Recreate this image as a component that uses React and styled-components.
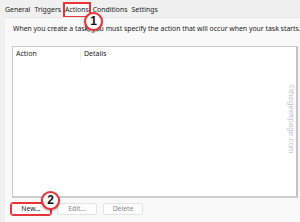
import React from 'react';
import styled, {createGlobalStyle} from 'styled-components';

const GlobalStyle = createGlobalStyle`
  html, body {
    margin: 0;
    padding: 0;
    background: #f0f0f0;
  }
`;

const Window = styled.div`
  position: relative;
  width: 300px;
  height: 222px;
  overflow: hidden;
  background: #f0f0f0;
  font-family: "Noto Sans", "Open Sans", sans-serif;
  color: #1b1b1b;
  display: flex;
  flex-direction: column;
`;

const TabBar = styled.div`
  display: flex;
  align-items: flex-end;
  height: 17px;
  padding-left: 4px;
`;

const Tab = styled.div`
  height: 14px;
  padding: 0 1px;
  margin-right: 2px;
  font-size: 6.9px;
  line-height: 13px;
  box-sizing: border-box;
  outline: ${p => (p.$marked ? '2px solid #e8343b' : 'none')};
  outline-offset: -1px;
  background: ${p => (p.$active ? '#f9f9f9' : 'transparent')};
`;

const Panel = styled.div`
  flex: 1;
  margin-left: 5px;
  background: #f9f9f9;
  border-top: 1px solid #e6e6e6;
  padding: 6px 2px 0 7px;
  display: flex;
  flex-direction: column;
`;

const Hint = styled.div`
  font-size: 6.9px;
  line-height: 10px;
  padding-left: 1px;
  white-space: nowrap;
`;

const ListBox = styled.div`
  margin-top: 12px;
  height: 152px;
  background: #fff;
  border: 1px solid #c9c9c9;
  border-right: 2px solid #c4c4c4;
  border-bottom: 2px solid #cfcfcf;
  box-sizing: border-box;
`;

const HeaderRow = styled.div`
  display: flex;
  height: 14px;
  font-size: 7px;
  line-height: 13px;
`;

const HeaderCell = styled.div`
  width: ${p => p.$width || 'auto'};
  padding-left: 3px;
  border-right: ${p => (p.$divider ? '1px solid #efefef' : 'none')};
`;

const ButtonRow = styled.div`
  display: flex;
  gap: 6px;
  margin-top: 5px;
  margin-left: -1px;
`;

const Button = styled.div`
  width: 40px;
  height: 12px;
  box-sizing: border-box;
  border: 1px solid ${p => (p.$marked ? '#e8343b' : '#e3e3e3')};
  outline: ${p => (p.$marked ? '1px solid #e8343b' : 'none')};
  background: #fdfdfd;
  border-radius: 2px;
  font-size: 6.8px;
  line-height: 10px;
  text-align: center;
  color: ${p => (p.$disabled ? '#8a8a8a' : '#1b1b1b')};
`;

const Marker = styled.div`
  position: absolute;
  left: ${p => p.$x}px;
  top: ${p => p.$y}px;
  width: 19px;
  height: 19px;
  border-radius: 50%;
  box-sizing: border-box;
  border: 2px solid #e8343b;
  background: #fff;
  box-shadow: 0 1px 2px rgba(0, 0, 0, 0.35);
  font-family: "Liberation Sans", Arial, sans-serif;
  font-weight: 700;
  font-size: 12px;
  line-height: 15px;
  text-align: center;
  color: #111;
`;

const Watermark = styled.div`
  position: absolute;
  left: 286px;
  top: 84px;
  transform-origin: 0 0;
  transform: rotate(90deg) translateY(-10px);
  font-family: "Liberation Sans", Arial, sans-serif;
  font-size: 8px;
  color: #c4c4cc;
  white-space: nowrap;
`;

const tabs = ['General', 'Triggers', 'Actions', 'Conditions', 'Settings'];

export default function App() {
  return (
    <Window>
      <GlobalStyle/>
      <TabBar>
        {tabs.map(t => (
          <Tab key={t} $active={t === 'Actions'} $marked={t === 'Actions'}>{t}</Tab>
        ))}
      </TabBar>
      <Panel>
        <Hint>When you create a task, you must specify the action that will occur when your task starts.</Hint>
        <ListBox>
          <HeaderRow>
            <HeaderCell $width="64px" $divider>Action</HeaderCell>
            <HeaderCell>Details</HeaderCell>
          </HeaderRow>
        </ListBox>
        <ButtonRow>
          <Button $marked>New...</Button>
          <Button $disabled>Edit...</Button>
          <Button $disabled>Delete</Button>
        </ButtonRow>
      </Panel>
      <Marker $x={84} $y={12}>1</Marker>
      <Marker $x={41} $y={191}>2</Marker>
      <Watermark>©thegeekpage.com</Watermark>
    </Window>
  );
}
